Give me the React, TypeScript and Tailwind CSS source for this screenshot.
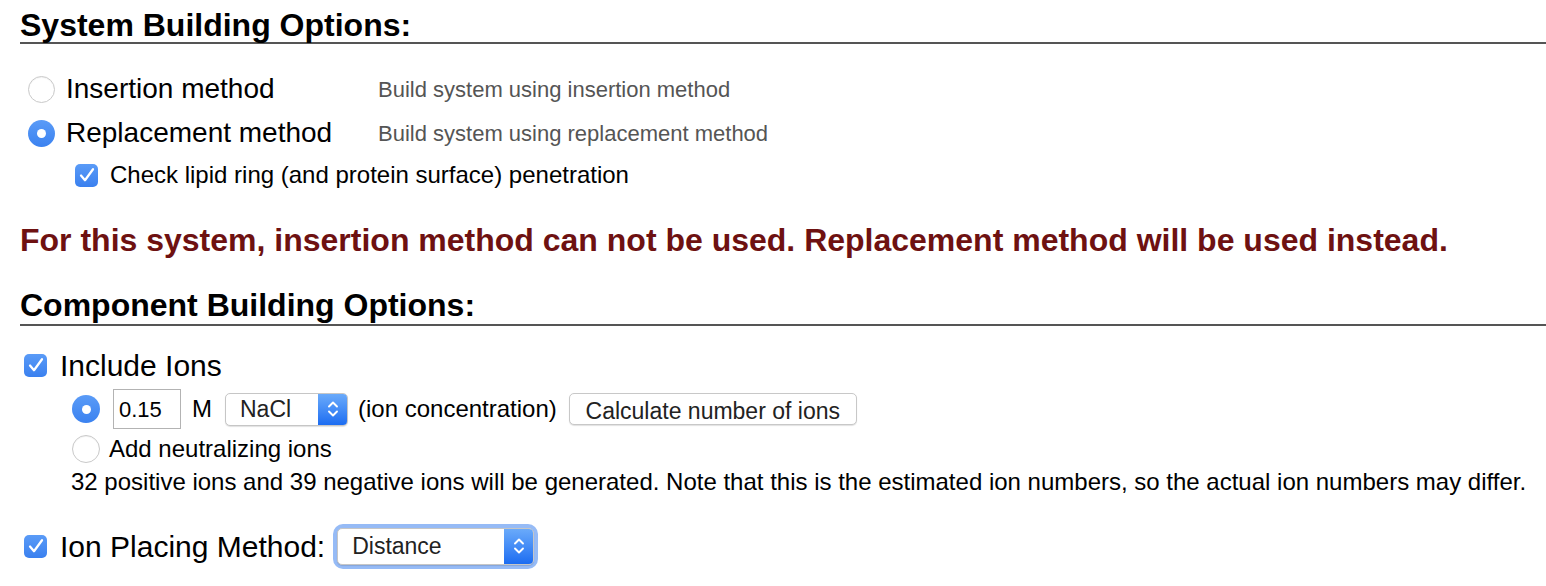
import React from "react";

function Radio({ checked, size = 26 }: { checked?: boolean; size?: number }) {
  return (
    <span
      className={
        checked
          ? "flex shrink-0 items-center justify-center rounded-full bg-gradient-to-b from-[#5a9bf7] to-[#3b82f0]"
          : "flex shrink-0 items-center justify-center rounded-full border border-[#c9c9c9] bg-white shadow-[inset_0_1px_1px_rgba(0,0,0,0.05)]"
      }
      style={{ width: size, height: size }}
    >
      {checked && <span className="h-[9px] w-[9px] rounded-full bg-white" />}
    </span>
  );
}

function Check() {
  return (
    <span className="flex h-[23px] w-[23px] shrink-0 items-center justify-center rounded-[5px] bg-gradient-to-b from-[#5a9bf7] to-[#3a80ef]">
      <svg width="20" height="20" viewBox="0 0 16 16" fill="none">
        <path d="M3.2 8.4 L6.4 12.2 L12.8 3.4" stroke="white" strokeWidth="1.8" strokeLinecap="round" strokeLinejoin="round" />
      </svg>
    </span>
  );
}

function Chevrons() {
  return (
    <svg width="14" height="22" viewBox="0 0 14 22" fill="none">
      <path d="M3 8.5 L7 4.5 L11 8.5" stroke="white" strokeWidth="1.9" strokeLinecap="round" strokeLinejoin="round" />
      <path d="M3 13.5 L7 17.5 L11 13.5" stroke="white" strokeWidth="1.9" strokeLinecap="round" strokeLinejoin="round" />
    </svg>
  );
}

function Select({ value, className }: { value: string; className: string }) {
  return (
    <div className={"flex overflow-hidden rounded-[5px] border border-[#c6c6c6] bg-white shadow-[0_1px_1px_rgba(0,0,0,0.12)] " + className}>
      <span className="flex flex-1 items-center pl-[14px] text-[23px] text-[#222]">{value}</span>
      <span className="flex w-[29px] items-center justify-center bg-gradient-to-b from-[#6aaafa] to-[#1b6cf1]">
        <Chevrons />
      </span>
    </div>
  );
}

export default function App() {
  return (
    <div className="h-[586px] w-[1546px] overflow-hidden bg-white pl-[20px] font-['Liberation_Sans',Arial,sans-serif] text-black">
      <h2 className="border-b-2 border-[#555] pb-[1px] pt-[9px] text-[32px] font-bold leading-[32px]">
        System Building Options:
      </h2>

      <div className="mt-[23px] flex h-[44px] items-center pl-[8px]">
        <Radio size={27} />
        <span className="ml-[11px] w-[312px] text-[28px]">Insertion method</span>
        <span className="text-[22px] text-[#555]">Build system using insertion method</span>
      </div>
      <div className="flex h-[44px] items-center pl-[8px]">
        <Radio checked size={27} />
        <span className="ml-[11px] w-[312px] text-[28px]">Replacement method</span>
        <span className="text-[22px] text-[#555]">Build system using replacement method</span>
      </div>
      <div className="flex h-[40px] items-center gap-[12px] pl-[55px]">
        <Check />
        <span className="text-[24px]">Check lipid ring (and protein surface) penetration</span>
      </div>

      <p className="mt-[29px] text-[32px] font-bold leading-[32px] text-[#6e1111]">
        For this system, insertion method can not be used. Replacement method will be used instead.
      </p>

      <h2 className="mt-[33px] border-b-2 border-[#555] pb-[3px] text-[32px] font-bold leading-[32px]">
        Component Building Options:
      </h2>

      <div className="mt-[19px] flex h-[40px] items-center gap-[13px] pl-[4px]">
        <Check />
        <span className="text-[30px]">Include Ions</span>
      </div>

      <div className="mt-[3px] flex h-[42px] items-center pl-[52px] text-[24px]">
        <Radio checked size={28} />
        <span className="ml-[13px] flex h-[40px] w-[68px] items-center border border-[#b3b3b3] pl-[5px] text-[22px]">0.15</span>
        <span className="ml-[11px]">M</span>
        <Select value="NaCl" className="ml-[13px] h-[33px] w-[123px]" />
        <span className="ml-[10px]">(ion concentration)</span>
        <button className="ml-[12px] h-[32px] w-[288px] rounded-[5px] border border-[#c8c8c8] bg-white text-[23px] text-[#222] shadow-[0_1px_1px_rgba(0,0,0,0.12)]">
          Calculate number of ions
        </button>
      </div>

      <div className="flex h-[38px] items-center pl-[52px]">
        <Radio size={28} />
        <span className="ml-[9px] text-[24px]">Add neutralizing ions</span>
      </div>

      <p className="pl-[51px] text-[24px] leading-[28px]">
        32 positive ions and 39 negative ions will be generated. Note that this is the estimated ion numbers, so the actual ion numbers may differ.
      </p>

      <div className="mt-[26px] flex h-[48px] items-center pl-[4px]">
        <Check />
        <span className="ml-[13px] text-[30px]">Ion Placing Method:</span>
        <div className="ml-[8px] rounded-[10px] bg-[#96bbf6] p-[4px]">
          <Select value="Distance" className="h-[37px] w-[197px]" />
        </div>
      </div>
    </div>
  );
}
